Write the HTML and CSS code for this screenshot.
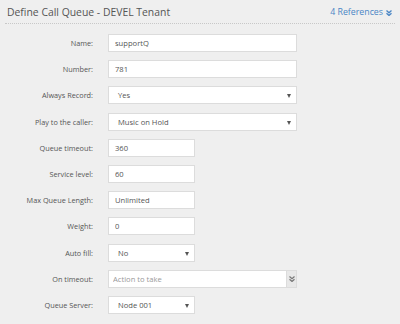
FILE: index.html
```html
<!DOCTYPE html>
<html lang="en">

<head>
  <meta charset="UTF-8" />
  <meta name="viewport" content="width=device-width, initial-scale=1.0" />
  <title>Define Call Queue</title>
  <link rel="stylesheet" href="styles.css">
</head>

<body>
  <div class="panel">
    <div class="panel-header">
      <h1>Define Call Queue - DEVEL Tenant</h1>
      <a class="refs" href="#">4 References
        <svg class="dbl" width="6" height="6" viewBox="0 0 6 6">
          <path d="M0.5 0.5 L3 2.8 L5.5 0.5" fill="none" stroke="#4a86c5" stroke-width="1.3" />
          <path d="M0.5 3.2 L3 5.5 L5.5 3.2" fill="none" stroke="#4a86c5" stroke-width="1.3" />
        </svg>
      </a>
    </div>

    <form class="queue-form">
      <div class="row">
        <label for="name">Name:</label>
        <input id="name" class="field wide" type="text" value="supportQ">
      </div>
      <div class="row">
        <label for="number">Number:</label>
        <input id="number" class="field wide" type="text" value="781">
      </div>
      <div class="row">
        <label>Always Record:</label>
        <div class="select wide"><span>Yes</span><i class="caret"></i></div>
      </div>
      <div class="row">
        <label>Play to the caller:</label>
        <div class="select wide"><span>Music on Hold</span><i class="caret"></i></div>
      </div>
      <div class="row">
        <label for="timeout">Queue timeout:</label>
        <input id="timeout" class="field short" type="text" value="360">
      </div>
      <div class="row">
        <label for="service">Service level:</label>
        <input id="service" class="field short" type="text" value="60">
      </div>
      <div class="row">
        <label for="maxlen">Max Queue Length:</label>
        <input id="maxlen" class="field short" type="text" value="Unlimited">
      </div>
      <div class="row">
        <label for="weight">Weight:</label>
        <input id="weight" class="field short" type="text" value="0">
      </div>
      <div class="row">
        <label>Auto fill:</label>
        <div class="select short"><span>No</span><i class="caret"></i></div>
      </div>
      <div class="row">
        <label for="ontimeout">On timeout:</label>
        <div class="combo wide">
          <input id="ontimeout" type="text" placeholder="Action to take">
          <span class="addon">
            <svg width="6" height="6" viewBox="0 0 6 6">
              <path d="M0.5 0.5 L3 2.8 L5.5 0.5" fill="none" stroke="#777" stroke-width="1.2" />
              <path d="M0.5 3.2 L3 5.5 L5.5 3.2" fill="none" stroke="#777" stroke-width="1.2" />
            </svg>
          </span>
        </div>
      </div>
      <div class="row">
        <label>Queue Server:</label>
        <div class="select short"><span>Node 001</span><i class="caret"></i></div>
      </div>
    </form>
  </div>
</body>

</html>
```

FILE: styles.css
```css
* {
  box-sizing: border-box
}

body {
  margin: 0;
  background: #efefef;
  font-family: "Open Sans", Arial, sans-serif;
  color: #555;
}

.panel {
  padding: 0 5px;
}

/* Title bar with dotted rule */
.panel-header {
  display: flex;
  justify-content: space-between;
  align-items: center;
  height: 24px;
  padding: 1px 3px 0 2px;
  border-bottom: 1px dotted #c8c8c8;
}

.panel-header h1 {
  margin: 0;
  font-size: 10.4px;
  font-weight: normal;
  color: #555;
}

.refs {
  display: flex;
  align-items: center;
  gap: 3px;
  font-size: 8.8px;
  color: #4a86c5;
  text-decoration: none;
}

.refs .dbl {
  margin-top: 1px;
}

/* Form rows */
.queue-form {
  display: flex;
  flex-direction: column;
  gap: 8.2px;
  padding-top: 10px;
}

.row {
  display: flex;
  align-items: center;
  height: 18px;
}

.row label {
  width: 88px;
  margin-right: 15px;
  text-align: right;
  font-size: 7.3px;
  color: #555;
}

.field,
.select,
.combo {
  height: 18px;
  background: #fff;
  border: 1px solid #dcdcdc;
  font-family: "Open Sans", Arial, sans-serif;
  font-size: 7.6px;
  color: #555;
}

.field {
  padding: 0 6px;
  outline: none;
}

.wide {
  width: 189px;
}

.short {
  width: 87px;
}

/* Fake select boxes */
.select {
  position: relative;
  display: flex;
  align-items: center;
  padding-left: 9px;
}

.caret {
  position: absolute;
  right: 5px;
  top: 7px;
  width: 0;
  height: 0;
  border-left: 2.5px solid transparent;
  border-right: 2.5px solid transparent;
  border-top: 4px solid #555;
}

/* Input with addon button */
.combo {
  display: flex;
}

.combo input {
  flex: 1;
  min-width: 0;
  border: none;
  padding: 0 4px;
  font-family: "Open Sans", Arial, sans-serif;
  font-size: 7.6px;
  color: #555;
  outline: none;
}

.combo input::placeholder {
  color: #999;
}

.addon {
  display: flex;
  align-items: center;
  justify-content: center;
  width: 10px;
  background: #e8e8e8;
  border-left: 1px solid #dcdcdc;
}
```
